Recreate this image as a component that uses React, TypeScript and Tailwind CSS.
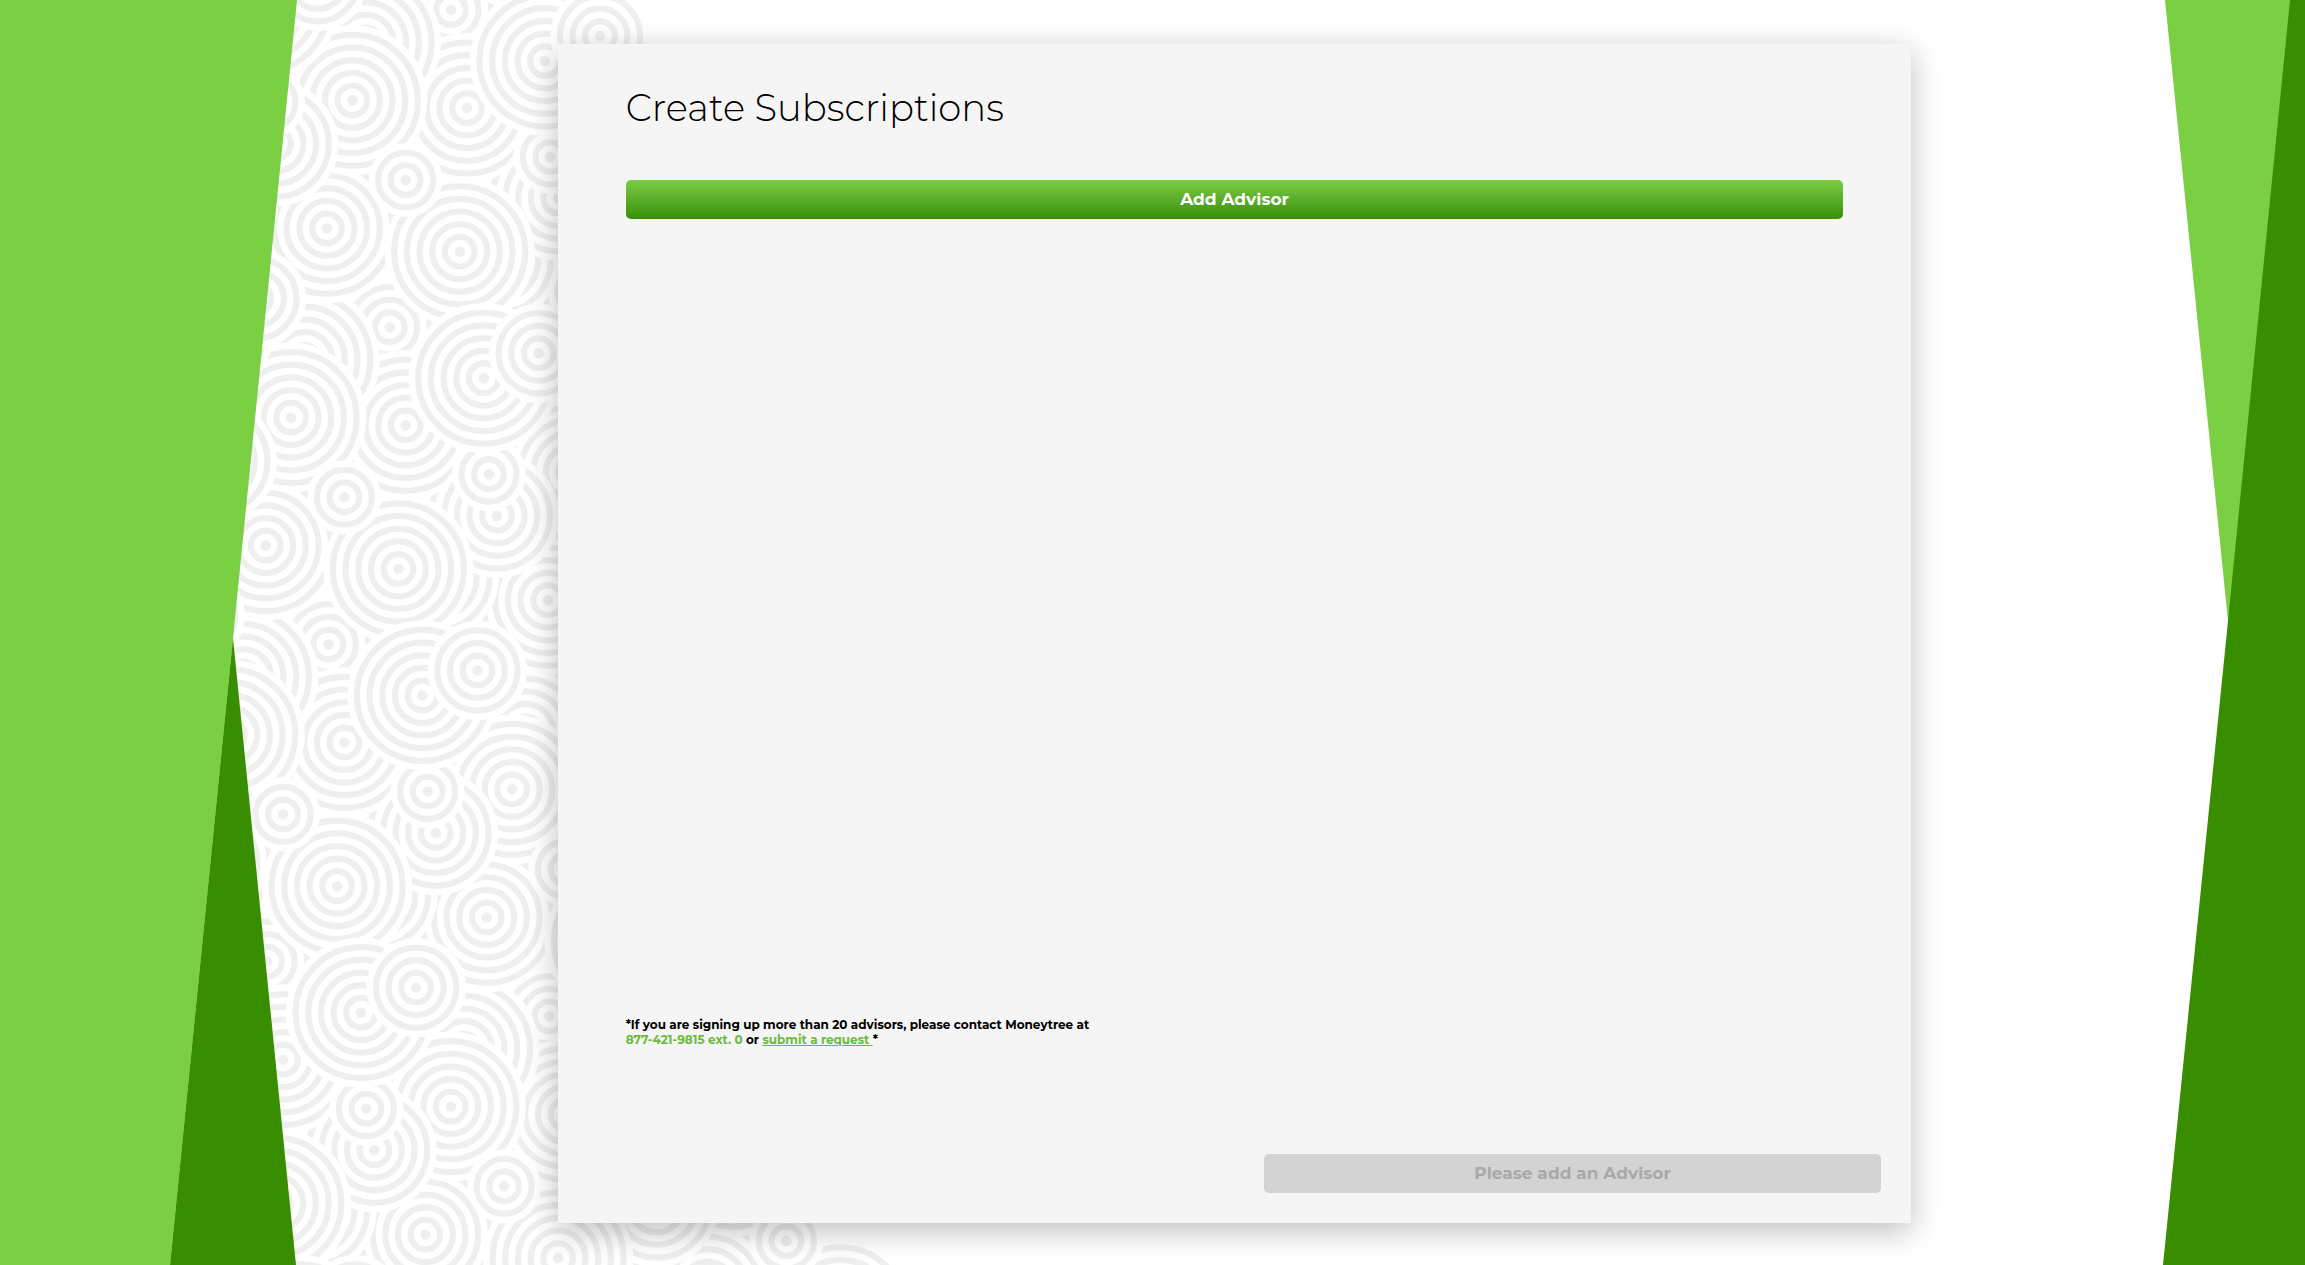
type Disc = { x: number; y: number; rings: number };

const STEP = 12.67;
const DOT = 5.2;
const BAND = 6.1;

// One repeat of the pattern, listed from the lowest disc to the topmost one.
const MOTIF: Disc[] = [
  { x: 558.3, y: 198.5, rings: 5 },
  { x: 451, y: 10, rings: 3 },
  { x: 467, y: 108, rings: 5 },
  { x: 366, y: 42.3, rings: 5 },
  { x: 327, y: 228.3, rings: 5 },
  { x: 498, y: 260, rings: 4 },
  { x: 352.4, y: 100.3, rings: 5 },
  { x: 558.3, y: 198.5, rings: 4 },
  { x: 459.7, y: 251.7, rings: 5 },
  { x: 550.3, y: 157, rings: 2 },
  { x: 545, y: 61, rings: 5 },
  { x: 405.7, y: 180, rings: 2 },
  { x: 600, y: 36, rings: 3 },
];

const ROWS = [-2, -1, 0, 1, 2, 3, 4, 5];
const COLUMNS = [-2, -1, 0, 1, 2];

const DISCS: Disc[] = MOTIF.flatMap((disc) =>
  ROWS.flatMap((row) =>
    COLUMNS.map((column) => ({
      x: disc.x - 61.3 * row + 282.3 * column,
      y: disc.y + 317.2 * row + 54.7 * column,
      rings: disc.rings,
    })),
  ),
).filter((disc) => disc.y > -90 && disc.y < 1350 && disc.x > 80 && disc.x < (disc.y < 700 ? 640 : 845));

function Ripple({ x, y, rings }: Disc) {
  return (
    <g>
      <circle cx={x} cy={y} r={DOT + STEP * rings + 6.5} fill="#fff" />
      <circle cx={x} cy={y} r={DOT} fill="#efefef" />
      {Array.from({ length: rings }, (_, i) => (
        <circle
          key={i}
          cx={x}
          cy={y}
          r={DOT + STEP * (i + 1) - BAND / 2}
          fill="none"
          stroke="#efefef"
          strokeWidth={BAND}
        />
      ))}
    </g>
  );
}

function Backdrop() {
  return (
    <div aria-hidden="true" className="pointer-events-none absolute inset-0 overflow-hidden">
      <svg
        viewBox="0 0 950 1265"
        preserveAspectRatio="xMinYMin meet"
        className="absolute top-0 left-0 h-full"
      >
        {DISCS.map((disc, i) => (
          <Ripple key={i} {...disc} />
        ))}
        <polygon points="0,0 297,0 233,638 170,1265 0,1265" fill="#7bcf42" />
        <polygon points="233,638 296,1265 170,1265" fill="#388e00" />
      </svg>
      <svg
        viewBox="0 0 145 1265"
        preserveAspectRatio="xMaxYMin meet"
        className="absolute top-0 right-0 h-full"
      >
        <polygon points="5,0 145,0 145,621 68,621" fill="#7bcf42" />
        <polygon points="130,0 145,0 145,1265 3,1265 68,621" fill="#388e00" />
      </svg>
    </div>
  );
}

export default function App() {
  return (
    <div className="relative min-h-screen bg-white font-['Montserrat','Inter',sans-serif] text-black">
      <Backdrop />
      <div className="relative grid min-h-screen grid-cols-[558fr_1353fr_394fr] pt-[44px] pb-[42px]">
        <main className="col-start-2 flex flex-col bg-[#f5f5f5] shadow-[0_8px_30px_rgba(0,0,0,0.26)]">
          <div className="flex flex-1 flex-col px-[5%] pt-10">
            <h1 className="text-[37px] leading-12 font-light">Create Subscriptions</h1>
            <button
              type="button"
              className="mt-12 h-[39px] w-full rounded-[5px] bg-linear-to-b from-[#7bcd43] to-[#388e05] text-[17px] font-bold text-white"
            >
              Add Advisor
            </button>
            <p className="mt-auto text-xs leading-[15px] font-bold">
              *If you are signing up more than 20 advisors, please contact Moneytree at
              <br />
              <span className="text-[#6cbb3c]">877-421-9815 ext. 0</span> or{" "}
              <a href="#request" className="whitespace-pre text-[#6cbb3c] underline">
                {"submit a request "}
              </a>
              *
            </p>
          </div>
          <div className="mt-[107px] flex justify-end px-[30px] pb-[30px]">
            <button
              type="button"
              disabled
              className="h-[39px] w-[617px] rounded-[5px] bg-[#d3d3d3] text-[17px] font-bold text-[#a9a9a9]"
            >
              Please add an Advisor
            </button>
          </div>
        </main>
      </div>
    </div>
  );
}
